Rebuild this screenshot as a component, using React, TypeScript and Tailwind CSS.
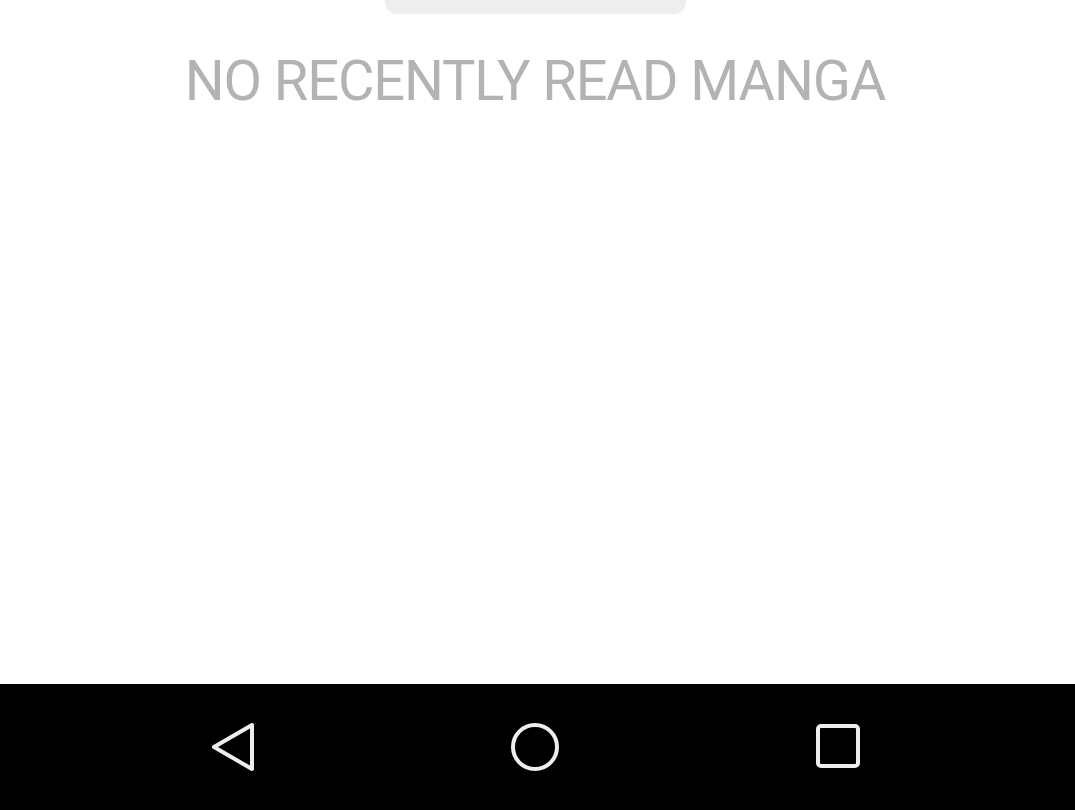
import React from "react";

export default function App() {
  return (
    <div className="w-[1075px] h-[810px] bg-white flex flex-col overflow-hidden" style={{ fontFamily: "Roboto, 'Noto Sans', sans-serif" }}>
      <div className="flex-1 w-[1070px] flex flex-col items-center">
        <div className="w-[301px] h-[14px] bg-[#eeeeee] rounded-b-[12px]" />
        <div className="mt-[32px] text-[56px] leading-[70px] text-[#b3b3b3] tracking-[-1.1px] whitespace-nowrap">NO RECENTLY READ MANGA</div>
      </div>
      <div className="h-[126px] bg-black flex items-center pl-[206px] gap-[251px]">
        <svg width="52" height="52" viewBox="0 0 52 52">
          <path d="M46 4 L46 48 L8 26 Z" fill="none" stroke="#eeeeee" strokeWidth="4" strokeLinejoin="round" />
        </svg>
        <svg width="52" height="52" viewBox="0 0 52 52">
          <circle cx="26" cy="26" r="22" fill="none" stroke="#eeeeee" strokeWidth="4" />
        </svg>
        <svg width="52" height="52" viewBox="0 0 52 52">
          <rect x="6" y="5" width="40" height="40" rx="3" fill="none" stroke="#eeeeee" strokeWidth="4" />
        </svg>
      </div>
    </div>
  );
}
